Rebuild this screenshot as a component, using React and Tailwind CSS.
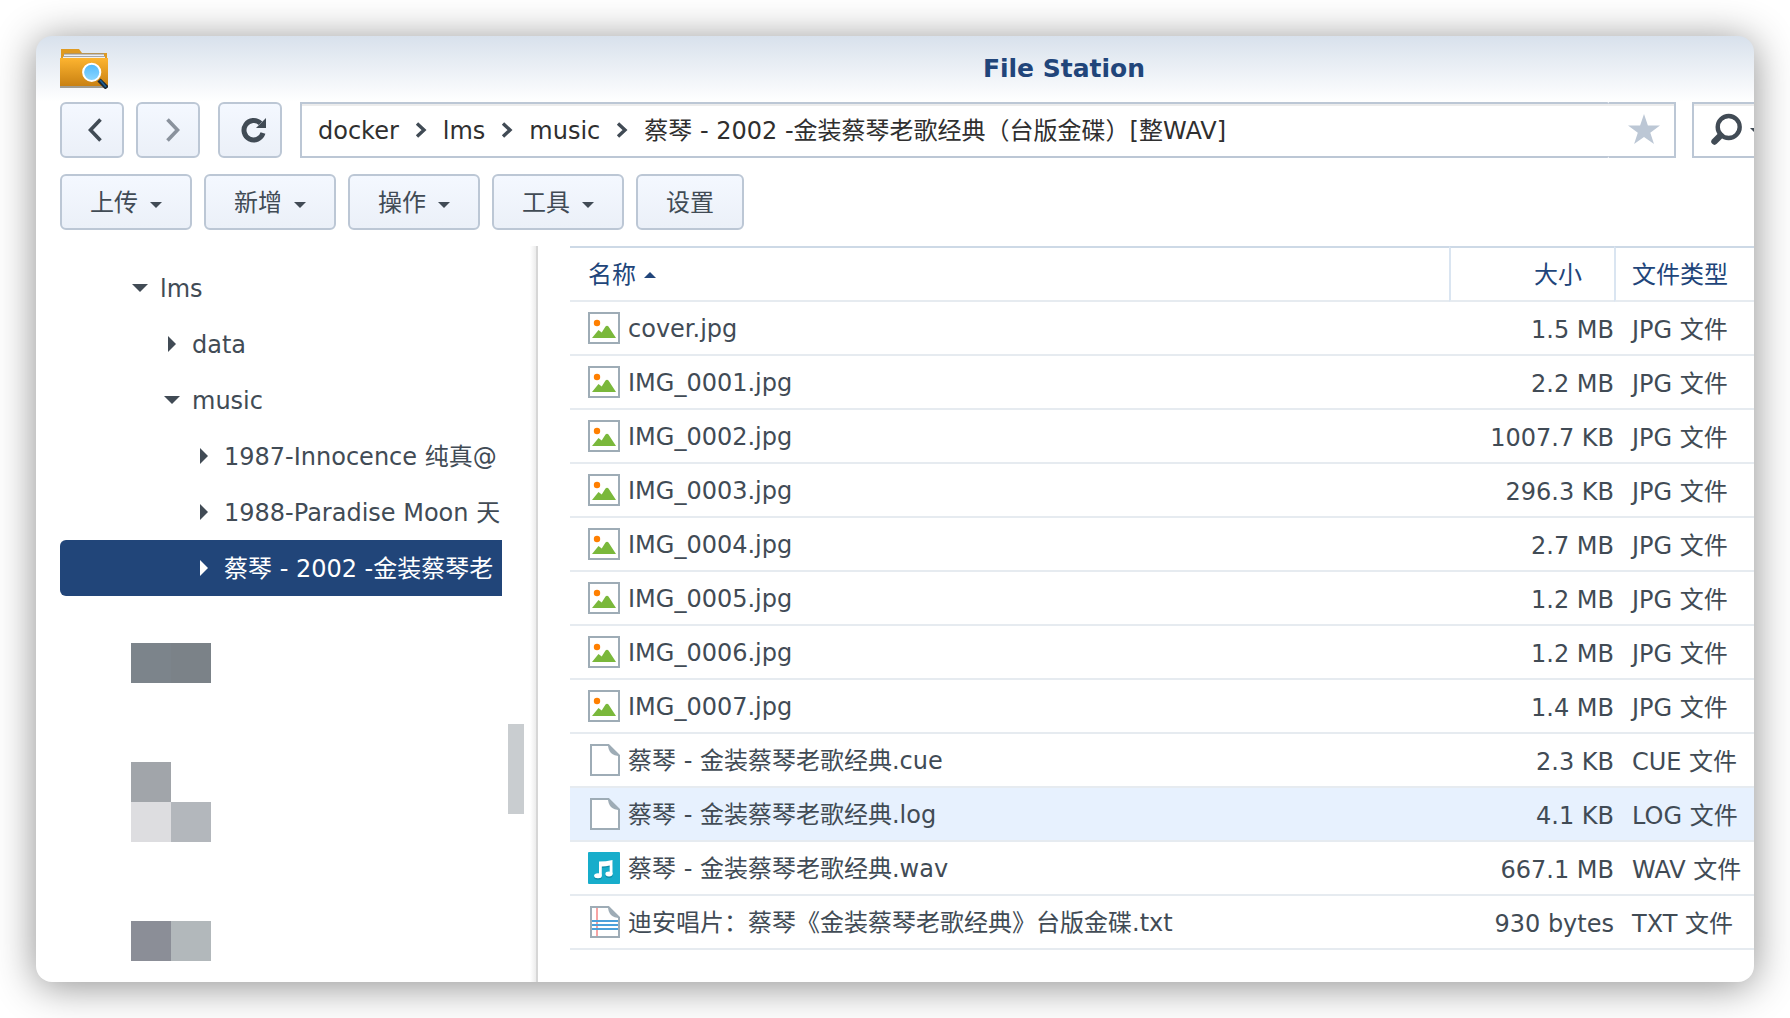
import React from "react";

const files = [
  { name: "cover.jpg", size: "1.5 MB", type: "JPG 文件", icon: "image" },
  { name: "IMG_0001.jpg", size: "2.2 MB", type: "JPG 文件", icon: "image" },
  { name: "IMG_0002.jpg", size: "1007.7 KB", type: "JPG 文件", icon: "image" },
  { name: "IMG_0003.jpg", size: "296.3 KB", type: "JPG 文件", icon: "image" },
  { name: "IMG_0004.jpg", size: "2.7 MB", type: "JPG 文件", icon: "image" },
  { name: "IMG_0005.jpg", size: "1.2 MB", type: "JPG 文件", icon: "image" },
  { name: "IMG_0006.jpg", size: "1.2 MB", type: "JPG 文件", icon: "image" },
  { name: "IMG_0007.jpg", size: "1.4 MB", type: "JPG 文件", icon: "image" },
  { name: "蔡琴 - 金装蔡琴老歌经典.cue", size: "2.3 KB", type: "CUE 文件", icon: "file" },
  { name: "蔡琴 - 金装蔡琴老歌经典.log", size: "4.1 KB", type: "LOG 文件", icon: "file", hover: true },
  { name: "蔡琴 - 金装蔡琴老歌经典.wav", size: "667.1 MB", type: "WAV 文件", icon: "audio" },
  { name: "迪安唱片：蔡琴《金装蔡琴老歌经典》台版金碟.txt", size: "930 bytes", type: "TXT 文件", icon: "text" },
];

const tree = [
  { label: "lms", indent: "pl-[68px]", open: true },
  { label: "data", indent: "pl-[100px]" },
  { label: "music", indent: "pl-[100px]", open: true },
  { label: "1987-Innocence 纯真@", indent: "pl-[132px]" },
  { label: "1988-Paradise Moon 天", indent: "pl-[132px]" },
  { label: "蔡琴 - 2002 -金装蔡琴老", indent: "pl-[132px]", selected: true },
];

const crumbs = ["docker", "lms", "music", "蔡琴 - 2002 -金装蔡琴老歌经典（台版金碟）[整WAV]"];

const menus = ["上传", "新增", "操作", "工具"];

function FolderLogo() {
  return (
    <svg className="h-10 w-12" viewBox="0 0 48 40" aria-hidden="true">
      <defs>
        <linearGradient id="front" x1="0" y1="0" x2="0" y2="1">
          <stop offset="0" stopColor="#fdb430" />
          <stop offset="1" stopColor="#c98112" />
        </linearGradient>
        <linearGradient id="lens" x1="0" y1="0" x2="0" y2="1">
          <stop offset="0" stopColor="#4fb8fb" />
          <stop offset="1" stopColor="#8fd8ff" />
        </linearGradient>
      </defs>
      <path d="M1 0h18l3 4h25v12H1z" fill="#df9a22" />
      <path d="M4 4.500h40V7h1v2H3V7h1z" fill="#8d8f92" />
      <path d="M4 5.500h40V7H4zM3 7.800h42V9H3z" fill="#f0f0f0" />
      <path d="M0 37h48v2H0z" fill="#8b8475" opacity=".8" />
      <path d="M0 9h48v28H0z" fill="url(#front)" />
      <path d="M39 31l8 8" stroke="#1c2732" strokeWidth="4.5" />
      <path d="M40 31l6 7" stroke="#1f5f92" strokeWidth="1.8" />
      <circle cx="31.7" cy="23.3" r="8.6" fill="url(#lens)" stroke="#fff" strokeWidth="2" />
    </svg>
  );
}

function FileIcon({ kind }) {
  if (kind === "image") {
    return (
      <svg className="size-8 shrink-0" viewBox="0 0 32 32" aria-hidden="true">
        <rect x="1" y="1" width="30" height="30" fill="#fff" stroke="#9eacb6" strokeWidth="2" />
        <circle cx="9" cy="11" r="3.2" fill="#ff7f00" />
        <path d="M4 26l6.500-8 3.200 2.500L17.500 14.500q1.500-1.300 3 0L28 26z" fill="#7ab83b" />
      </svg>
    );
  }
  if (kind === "audio") {
    return (
      <svg className="size-8 shrink-0" viewBox="0 0 32 32" aria-hidden="true">
        <rect width="32" height="32" rx="1" fill="#17adcb" />
        <g fill="#0f8da8" transform="translate(0 1.500)">
          <path d="M11 9.500L24.500 8v5L14 14.500V23h-3z" />
          <ellipse cx="10" cy="23.800" rx="3.900" ry="2.500" />
          <ellipse cx="21" cy="22" rx="3.600" ry="2.400" />
        </g>
        <g fill="#fff">
          <path d="M11 9.500Q18 9.500 24.500 8v14h-2.800v-8.500Q18 14.500 13.800 14.500V23.500H11z" />
          <ellipse cx="10" cy="23.800" rx="3.900" ry="2.500" />
          <ellipse cx="21" cy="22" rx="3.600" ry="2.400" />
        </g>
      </svg>
    );
  }
  return (
    <svg className="size-8 shrink-0" viewBox="0 0 32 32" aria-hidden="true">
      <path d="M3 1h17.500L31 11.500V31H3z" fill="#fff" stroke="#9eacb6" strokeWidth="2" />
      {kind === "text" && (
        <>
          <path d="M9 2v28" stroke="#f7a4a4" strokeWidth="2" />
          <path d="M4 15h26M4 19h26M4 23h26" stroke="#4ba0da" strokeWidth="2" />
        </>
      )}
      <path d="M20 0l12 12c-8 0-12-4-12-12z" fill="#9eacb6" />
    </svg>
  );
}

function Caret() {
  return (
    <svg className="mt-1.5 h-1.5 w-3" viewBox="0 0 12 6" aria-hidden="true">
      <path d="M0 0h12L6 6z" fill="#414b55" />
    </svg>
  );
}

function Arrow({ open }) {
  return (
    <svg className="size-6 shrink-0" viewBox="0 0 24 24" fill="currentColor" aria-hidden="true">
      {open ? <path d="M4 8h16l-8 8z" /> : <path d="M8 4l8 8-8 8z" />}
    </svg>
  );
}

function NavButton({ label, children }) {
  return (
    <button
      type="button"
      aria-label={label}
      className="h-14 w-16 shrink-0 rounded-md border-2 border-[#bcc7d5] bg-linear-to-b from-[#f4f8ff] to-[#ebf0f8]"
    >
      <svg className="h-[52px] w-[60px]" viewBox="0 0 60 52" fill="none" aria-hidden="true">
        {children}
      </svg>
    </button>
  );
}

function ToolButton({ label, menu }) {
  return (
    <button
      type="button"
      className="flex h-14 items-center gap-3 rounded-md border-2 border-[#bcc7d5] bg-linear-to-b from-[#f4f8ff] to-[#ebf0f8] px-7"
    >
      <span className="pt-0.5">{label}</span>
      {menu && <Caret />}
    </button>
  );
}

function Sidebar() {
  return (
    <aside className="flex w-[502px] shrink-0 border-r-2 border-[#d6d6d6] pl-6">
      <div className="w-[442px] overflow-hidden pt-3.5">
        <ul>
          {tree.map((node) => (
            <li key={node.label}>
              <button
                type="button"
                className={`flex h-14 w-full items-center gap-2 overflow-hidden whitespace-nowrap text-left ${node.indent} ${
                  node.selected ? "rounded-l-md bg-[#214579] text-white" : ""
                }`}
              >
                <Arrow open={node.open} />
                <span className="pt-0.5">{node.label}</span>
              </button>
            </li>
          ))}
        </ul>
        <div className="ml-[71px] mt-[47px] flex">
          <div className="size-10 bg-[#7c848b]" />
          <div className="size-10 bg-[#7b8288]" />
        </div>
        <div className="ml-[71px] mt-[79px] grid w-20 grid-cols-2">
          <div className="size-10 bg-[#a1a5aa]" />
          <div className="size-10" />
          <div className="size-10 bg-[#dddde0]" />
          <div className="size-10 bg-[#b3b7bc]" />
        </div>
        <div className="ml-[71px] mt-[79px] flex">
          <div className="size-10 bg-[#8b8e97]" />
          <div className="size-10 bg-[#b2b8bb]" />
        </div>
      </div>
      <div className="ml-1.5 mt-[478px] h-[90px] w-4 bg-[#c9cdd0]" />
      <div className="ml-auto w-1.5 bg-linear-to-r from-white to-[#ececec]" />
    </aside>
  );
}

function FileTable() {
  return (
    <table className="w-full table-fixed border-separate border-spacing-0 whitespace-nowrap">
      <thead>
        <tr className="h-14 text-[#21457a]">
          <th className="border-b-2 border-t-2 border-b-[#e6ebf0] border-t-[#cdd9e6] p-0 pl-[18px] text-left font-normal">
            <button type="button" className="flex items-center gap-2">
              <span className="pt-0.5">名称</span>
              <svg className="mt-0.5 h-1.5 w-3" viewBox="0 0 12 6" aria-hidden="true">
                <path d="M0 6h12L6 0z" fill="#21457a" />
              </svg>
            </button>
          </th>
          <th className="w-[165px] border-b-2 border-l-2 border-t-2 border-b-[#e6ebf0] border-l-[#dae5f1] border-t-[#cdd9e6] p-0 pr-8 pt-0.5 text-right font-normal">
            大小
          </th>
          <th className="w-[140px] border-b-2 border-l-2 border-t-2 border-b-[#e6ebf0] border-l-[#dae5f1] border-t-[#cdd9e6] p-0 pl-4 pt-0.5 text-left font-normal">
            文件类型
          </th>
        </tr>
      </thead>
      <tbody>
        {files.map((f) => (
          <tr key={f.name} className={f.hover ? "h-[54px] bg-[#e7f1fe]" : "h-[54px]"}>
            <td className="border-b-2 border-[#e6ebf0] p-0 pl-[18px]">
              <div className="flex items-center gap-2">
                <FileIcon kind={f.icon} />
                <span className="pt-0.5">{f.name}</span>
              </div>
            </td>
            <td className="border-b-2 border-[#e6ebf0] p-0 pt-1 text-right">{f.size}</td>
            <td className="border-b-2 border-[#e6ebf0] p-0 pl-[18px] pt-1">{f.type}</td>
          </tr>
        ))}
      </tbody>
    </table>
  );
}

export default function App() {
  return (
    <div className="flex min-h-screen bg-white p-9 font-['DejaVu_Sans','Noto_Sans_CJK_SC',sans-serif] text-2xl text-[#414b55]">
      <main className="flex min-w-0 flex-1 flex-col overflow-hidden rounded-2xl bg-white bg-linear-to-b from-[#d8e1ec] to-white bg-[length:100%_66px] bg-no-repeat shadow-[0_4px_40px_rgba(0,0,0,0.45)]">
        <header className="flex h-[66px] shrink-0 items-center px-6">
          <FolderLogo />
          <h1 className="flex-1 pl-[290px] text-center text-[25px] font-bold text-[#21457a]">File Station</h1>
        </header>

        <nav className="flex pl-6">
          <NavButton label="后退">
            <path d="M38.500 15.500L28.500 26l10 10.500" stroke="#414b55" strokeWidth="3.600" />
          </NavButton>
          <div className="ml-3 flex">
            <NavButton label="前进">
              <path d="M29.500 15.500L39.500 26l-10 10.500" stroke="#8a929d" strokeWidth="3.600" />
            </NavButton>
          </div>
          <div className="ml-[18px] flex">
            <NavButton label="刷新">
              <path d="M43 29A9.700 9.700 0 1 1 40.500 19.300" stroke="#414b55" strokeWidth="5" />
              <path d="M46 14v10H36z" fill="#414b55" />
            </NavButton>
          </div>
          <div className="ml-[18px] flex h-14 min-w-0 flex-1">
            <div className="flex min-w-0 flex-1 items-center gap-4 overflow-hidden whitespace-nowrap rounded-r-[2px] border-y-2 border-l-2 border-[#bcc7d5] bg-white pl-4 text-[#2f2f2f] shadow-[inset_0_2px_0_#ececec]">
              {crumbs.map((c, i) => (
                <React.Fragment key={c}>
                  {i > 0 && (
                    <svg className="h-4 w-3 shrink-0" viewBox="0 0 12 16" fill="none" aria-hidden="true">
                      <path d="M2 1.500L9 8l-7 6.500" stroke="#414b55" strokeWidth="3.400" />
                    </svg>
                  )}
                  <a href="#path" className="pt-0.5">
                    {c}
                  </a>
                </React.Fragment>
              ))}
            </div>
            <button
              type="button"
              aria-label="收藏"
              className="flex w-[67px] items-center justify-center border-y-2 border-r-2 border-[#bcc7d5] bg-white pl-1 shadow-[inset_0_2px_0_#ececec]"
            >
              <svg className="size-8" viewBox="0 0 32 32" aria-hidden="true">
                <path d="M16 0l3.900 11.500L32 11.600l-9.700 7.200L26 30l-10-7-9.900 7 3.700-11.200L0 11.600l12.100-.1z" fill="#bcc7d5" />
              </svg>
            </button>
          </div>
          <button
            type="button"
            aria-label="搜索"
            className="ml-4 h-14 w-[62px] shrink-0 overflow-hidden border-y-2 border-l-2 border-[#bcc7d5] bg-white shadow-[inset_0_2px_0_#ececec]"
          >
            <svg className="h-[52px] w-[72px] max-w-none" viewBox="0 0 72 52" fill="none" aria-hidden="true">
              <circle cx="34.700" cy="23" r="11" stroke="#414b55" strokeWidth="4.400" />
              <path d="M26.500 31.500l-6 6" stroke="#414b55" strokeWidth="6.400" strokeLinecap="round" />
              <path d="M56 24h12l-6 6z" fill="#414b55" />
            </svg>
          </button>
        </nav>

        <div className="mt-4 flex gap-3 pl-6">
          {menus.map((m) => (
            <ToolButton key={m} label={m} menu />
          ))}
          <ToolButton label="设置" />
        </div>

        <div className="mt-4 flex flex-1">
          <Sidebar />
          <section className="min-w-0 flex-1 pl-8">
            <FileTable />
          </section>
        </div>
      </main>
    </div>
  );
}
